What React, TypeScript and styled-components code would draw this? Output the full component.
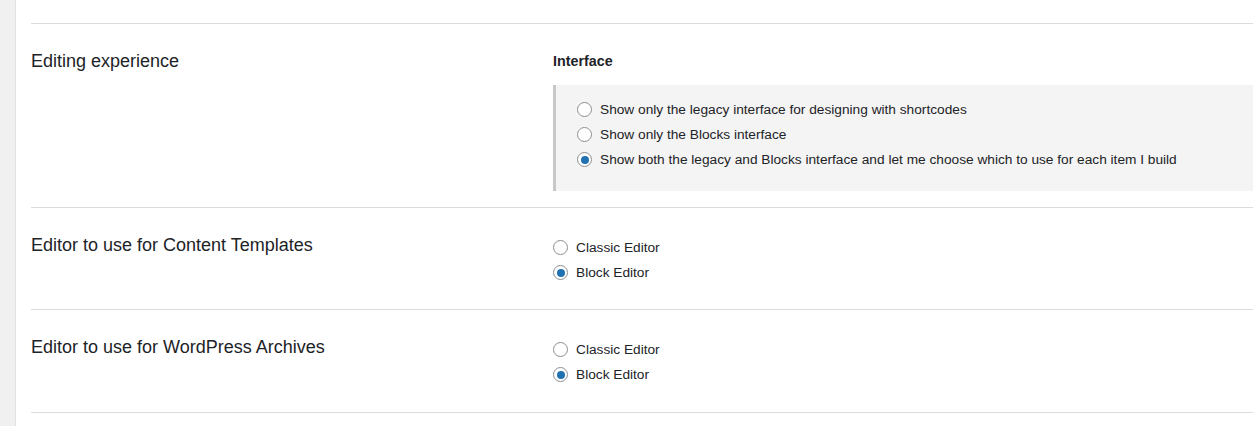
import React from "react";
import styled, { createGlobalStyle } from "styled-components";

const GlobalStyle = createGlobalStyle`
  html, body {
    margin: 0;
    padding: 0;
    background: #fff;
  }
  body {
    font-family: "Liberation Sans", Arial, sans-serif;
    color: #1d2327;
  }
`;

const Page = styled.div`
  display: flex;
  min-height: 426px;
`;

const SideStrip = styled.div`
  width: 15px;
  flex-shrink: 0;
  background: #f0f0f0;
  border-right: 1px solid #e2e2e2;
`;

const Content = styled.div`
  flex: 1;
  padding: 23px 0 0 15px;
`;

const Row = styled.section<{ $bottom?: number }>`
  display: grid;
  grid-template-columns: 522px 1fr;
  border-top: 1px solid #dcdcde;
  padding: 27px 0 ${(p) => p.$bottom ?? 24}px;
  &:last-child {
    border-bottom: 1px solid #dcdcde;
  }
`;

const Label = styled.div`
  font-size: 18px;
  line-height: 20px;
  color: #1d2327;
`;

const Field = styled.div`
  display: flex;
  flex-direction: column;
`;

const FieldTitle = styled.div`
  font-size: 14.3px;
  font-weight: 700;
  line-height: 20px;
  margin-bottom: 14px;
`;

const OptionBox = styled.div`
  background: #f4f4f4;
  border-left: 3px solid #c8c8c8;
  padding: 12px 0 19px 21px;
`;

const OptionList = styled.div`
  display: flex;
  flex-direction: column;
`;

const Option = styled.label`
  display: flex;
  align-items: center;
  height: 25px;
  font-size: 13.7px;
  color: #1d2327;
  cursor: pointer;
`;

const Radio = styled.input.attrs({ type: "radio" })`
  appearance: none;
  -webkit-appearance: none;
  margin: 0 8px 0 0;
  width: 15px;
  height: 15px;
  border: 1px solid #8c8f94;
  border-radius: 50%;
  background: #fff;
  box-sizing: border-box;
  display: grid;
  place-items: center;
  flex-shrink: 0;
  &:checked::before {
    content: "";
    width: 8px;
    height: 8px;
    border-radius: 50%;
    background: #2271b1;
  }
`;

type Choice = { text: string; checked?: boolean };

const RadioGroup = ({ name, choices }: { name: string; choices: Choice[] }) => (
  <OptionList>
    {choices.map((c) => (
      <Option key={c.text}>
        <Radio name={name} defaultChecked={c.checked} />
        {c.text}
      </Option>
    ))}
  </OptionList>
);

const editorChoices: Choice[] = [
  { text: "Classic Editor" },
  { text: "Block Editor", checked: true },
];

const App = () => {
  return (
    <>
      <GlobalStyle />
      <Page>
        <SideStrip />
        <Content>
          <Row $bottom={16}>
            <Label>Editing experience</Label>
            <Field>
              <FieldTitle>Interface</FieldTitle>
              <OptionBox>
                <RadioGroup
                  name="interface"
                  choices={[
                    { text: "Show only the legacy interface for designing with shortcodes" },
                    { text: "Show only the Blocks interface" },
                    {
                      text: "Show both the legacy and Blocks interface and let me choose which to use for each item I build",
                      checked: true,
                    },
                  ]}
                />
              </OptionBox>
            </Field>
          </Row>
          <Row>
            <Label>Editor to use for Content Templates</Label>
            <Field>
              <RadioGroup name="ct-editor" choices={editorChoices} />
            </Field>
          </Row>
          <Row $bottom={25}>
            <Label>Editor to use for WordPress Archives</Label>
            <Field>
              <RadioGroup name="wpa-editor" choices={editorChoices} />
            </Field>
          </Row>
        </Content>
      </Page>
    </>
  );
};

export default App;
